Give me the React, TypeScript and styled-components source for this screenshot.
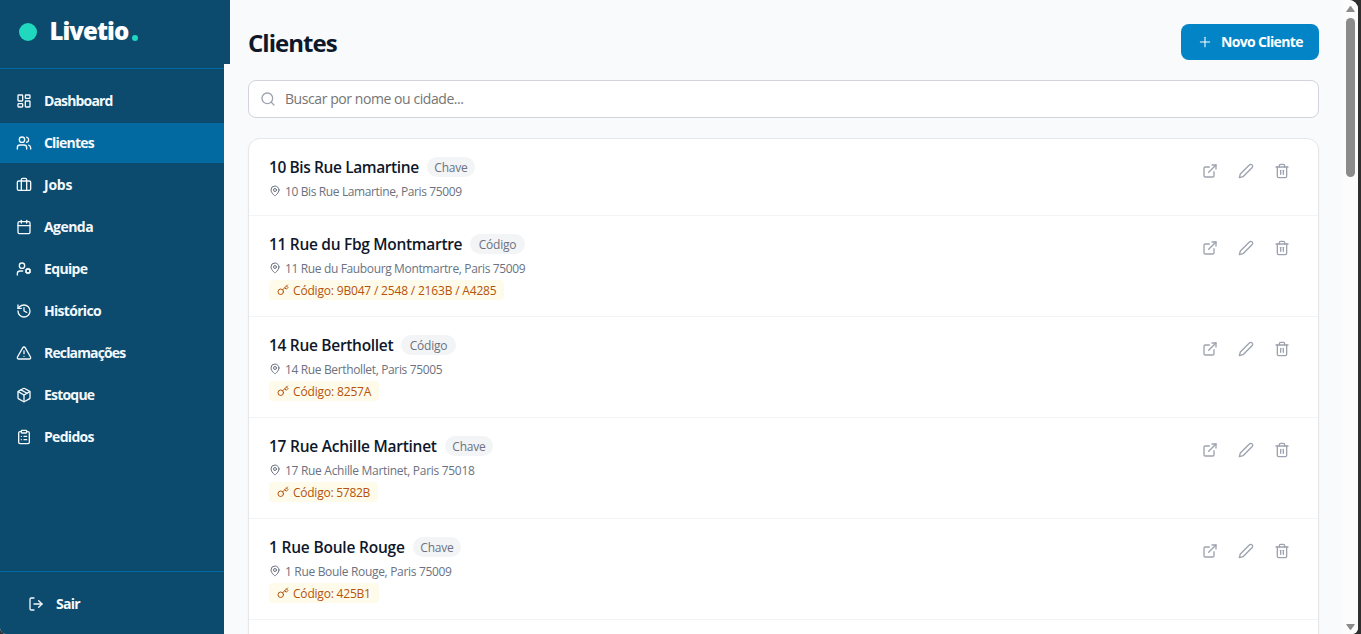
import React from 'react';
import styled, { createGlobalStyle } from 'styled-components';
import {
  LayoutDashboard, Users, Briefcase, Calendar, UserCog, History, TriangleAlert, Package,
  ClipboardList, LogOut, Plus, Search, ExternalLink, Trash2,
} from 'lucide-react';

const GlobalStyle = createGlobalStyle`
  * { box-sizing: border-box; }
  body { margin: 0; overflow: hidden; background: #2f2f2f; }
  button, input { font: inherit; border: 0; background: none; padding: 0; }
`;

const Shell = styled.div`
  display: flex;
  width: 1358px;
  height: 634px;
  overflow: hidden;
  border-radius: 0 9px 6px 6px;
  background: #f8fafc;
  color: #0f172a;
  font-family: 'Segoe UI', 'Open Sans', 'Noto Sans', sans-serif;
  font-size: 14px;
  line-height: 20px;
`;

const Sidebar = styled.aside`
  display: flex;
  flex-direction: column;
  flex: none;
  width: 224px;
  background: #0c4a6e;
  color: #f4f9fc;
`;

const Brand = styled.div`
  display: flex;
  align-items: center;
  width: 230px;
  height: 64px;
  padding-left: 19px;
  margin-bottom: 4px;
  background: #0c4a6e;
`;

const BrandMark = styled.span`
  width: 18px;
  height: 18px;
  margin-right: 12.5px;
  border-radius: 50%;
  background: #20d8bd;
`;

const BrandName = styled.span`
  font-size: 24px;
  line-height: 32px;
  font-weight: 800;
  letter-spacing: -0.95px;
  width: 79px;
  margin-bottom: 3px;
  color: #fff;
`;

const BrandDot = styled.span`
  width: 6px;
  height: 6px;
  margin: 12px 0 0 3.3px;
  border-radius: 50%;
  background: #20d8bd;
`;

const Nav = styled.nav`
  display: flex;
  flex: 1;
  flex-direction: column;
  gap: 2px;
  padding-top: 12px;
  border-top: 1px solid #0369a1;
`;

const NavItem = styled.a<{ $active?: boolean; $spacing: number }>`
  display: flex;
  align-items: center;
  gap: 12px;
  height: 40px;
  padding: 0 16px;
  background: ${(p) => (p.$active ? '#0369a1' : 'transparent')};
  font-weight: 700;
  letter-spacing: ${(p) => p.$spacing}px;
`;

const SidebarFooter = styled.div`
  height: 63px;
  padding: 12px;
  border-top: 1px solid #0369a1;
`;

const Main = styled.main`
  flex: 1;
  min-width: 0;
  padding: 24px 24px 0;
`;

const PageHeader = styled.header`
  display: flex;
  align-items: center;
  justify-content: space-between;
  height: 36px;
  margin-bottom: 20px;
`;

const PageTitle = styled.h1`
  margin: 1px 0 0;
  font-size: 24px;
  line-height: 32px;
  font-weight: 700;
  letter-spacing: -0.97px;
`;

const PrimaryButton = styled.button`
  display: flex;
  align-items: center;
  gap: 8px;
  width: 138px;
  height: 36px;
  padding-left: 16px;
  border-radius: 8px;
  background: #0284c7;
  color: #fff;
  font-weight: 700;
  letter-spacing: -0.65px;
  white-space: nowrap;
`;

const SearchBox = styled.label`
  display: flex;
  align-items: center;
  gap: 9px;
  height: 38px;
  margin-bottom: 20px;
  padding: 0 11px;
  border: 1px solid #d1d5db;
  border-radius: 8px;
  background: #fff;
  color: #9ca3af;
`;

const SearchInput = styled.input`
  flex: 1;
  outline: 0;
  letter-spacing: -0.43px;
  &::placeholder { color: #757575; opacity: 1; }
`;

const Card = styled.section`
  height: 520px;
  border: 1px solid #e5e7eb;
  border-radius: 12px;
  background: #fff;
  box-shadow: 0 1px 2px rgba(0, 0, 0, 0.05);
`;

const Row = styled.article`
  display: flex;
  justify-content: space-between;
  padding: 16px 20px;
  border-bottom: 1px solid #f3f4f6;
`;

const TitleLine = styled.div`
  display: flex;
  align-items: center;
  gap: 8px;
  height: 24px;
  margin-bottom: 4px;
`;

const ClientName = styled.h2<{ $width: number; $spacing: number }>`
  width: ${(p) => p.$width}px;
  margin: 0;
  font-size: 15.5px;
  line-height: 24px;
  font-weight: 600;
  letter-spacing: ${(p) => p.$spacing}px;
  white-space: nowrap;
`;

const Badge = styled.span<{ $width: number }>`
  display: flex;
  justify-content: center;
  width: ${(p) => p.$width}px;
  height: 20px;
  border-radius: 10px;
  background: #f3f4f6;
  color: #6b7280;
  font-size: 12px;
  line-height: 22px;
  letter-spacing: -0.2px;
`;

const Address = styled.div<{ $spacing: number }>`
  display: flex;
  align-items: center;
  gap: 4px;
  height: 16px;
  color: #6b7280;
  font-size: 12px;
  line-height: 18px;
  letter-spacing: ${(p) => p.$spacing}px;
`;

const AccessCode = styled.div<{ $spacing: number }>`
  display: flex;
  align-items: center;
  gap: 4px;
  width: fit-content;
  height: 20px;
  margin-top: 4px;
  padding: 0 8px;
  border-radius: 4px;
  background: #fffbeb;
  color: #b45309;
  font-size: 12px;
  letter-spacing: ${(p) => p.$spacing}px;
`;

const SmallText = styled.span`
  padding-top: 1px;
`;

const Actions = styled.div`
  display: flex;
  gap: 4px;
`;

const IconButton = styled.button`
  display: grid;
  place-items: center;
  width: 32px;
  height: 32px;
  color: #9ca3af;
`;

const ScrollTrack = styled.div`
  display: flex;
  flex-direction: column;
  align-items: center;
  width: 15px;
  padding: 6px 0 4px;
  background: #fcfcfc;
`;

const ScrollThumb = styled.div`
  width: 9px;
  height: 159px;
  margin: 6px 0 auto;
  border-radius: 5px;
  background: #8b8b8b;
`;

const StrokeIcon = styled.svg.attrs({
  viewBox: '0 0 24 24',
  fill: 'none',
  stroke: 'currentColor',
  strokeWidth: 2,
  strokeLinecap: 'round',
  strokeLinejoin: 'round',
})`
  flex: none;
`;

const PinIcon = () => (
  <StrokeIcon width="12" height="12">
    <path d="M20 10c0 6-8 12-8 12s-8-6-8-12a8 8 0 0 1 16 0Z" />
    <circle cx="12" cy="10" r="3" />
  </StrokeIcon>
);

const KeyIcon = () => (
  <StrokeIcon width="12" height="12">
    <circle cx="7.5" cy="15.5" r="5.5" />
    <path d="m21 2-9.6 9.6" />
    <path d="m15.5 7.5 3 3L22 7l-3-3" />
  </StrokeIcon>
);

const PencilIcon = () => (
  <StrokeIcon width="16" height="16">
    <path d="M17 3a2.85 2.83 0 1 1 4 4L7.5 20.5 2 22l1.5-5.5Z" />
  </StrokeIcon>
);

const Arrow = ({ down }: { down?: boolean }) => (
  <svg width="9" height="6" viewBox="0 0 9 6">
    <path d={down ? 'M.7 0h7.6q.7 0 .3.7L5.2 5.6q-.7.8-1.4 0L.4.7Q0 0 .7 0Z' : 'M.7 6h7.6q.7 0 .3-.7L5.2.4q-.7-.8-1.4 0L.4 5.3Q0 6 .7 6Z'} fill="#8b8b8b" />
  </svg>
);

const navItems = [
  { label: 'Dashboard', Icon: LayoutDashboard, spacing: -0.85 },
  { label: 'Clientes', Icon: Users, spacing: -0.8, active: true },
  { label: 'Jobs', Icon: Briefcase, spacing: -0.25 },
  { label: 'Agenda', Icon: Calendar, spacing: -0.55 },
  { label: 'Equipe', Icon: UserCog, spacing: -0.65 },
  { label: 'Histórico', Icon: History, spacing: -0.7 },
  { label: 'Reclamações', Icon: TriangleAlert, spacing: -0.85 },
  { label: 'Estoque', Icon: Package, spacing: -0.8 },
  { label: 'Pedidos', Icon: ClipboardList, spacing: -0.7 },
];

const clients = [
  { name: '10 Bis Rue Lamartine', access: 'Chave', address: '10 Bis Rue Lamartine, Paris 75009', width: 150, ns: -0.4, as: -0.38, cs: -0.2 },
  { name: '11 Rue du Fbg Montmartre', access: 'Código', address: '11 Rue du Faubourg Montmartre, Paris 75009', code: '9B047 / 2548 / 2163B / A4285', width: 193, ns: -0.3, as: -0.36, cs: -0.18 },
  { name: '14 Rue Berthollet', access: 'Código', address: '14 Rue Berthollet, Paris 75005', code: '8257A', width: 124, ns: -0.3, as: -0.36, cs: -0.15 },
  { name: '17 Rue Achille Martinet', access: 'Chave', address: '17 Rue Achille Martinet, Paris 75018', code: '5782B', width: 168, ns: -0.25, as: -0.3, cs: -0.25 },
  { name: '1 Rue Boule Rouge', access: 'Chave', address: '1 Rue Boule Rouge, Paris 75009', code: '425B1', width: 136, ns: -0.2, as: -0.32, cs: -0.2 },
];

export default function App() {
  return (
    <>
      <GlobalStyle />
      <Shell>
        <Sidebar>
          <Brand><BrandMark /><BrandName>Livetio</BrandName><BrandDot /></Brand>
          <Nav>
            {navItems.map(({ label, Icon, active, spacing }) => (
              <NavItem key={label} $active={active} $spacing={spacing}><Icon size={16} />{label}</NavItem>
            ))}
          </Nav>
          <SidebarFooter><NavItem $spacing={-0.75}><LogOut size={16} />Sair</NavItem></SidebarFooter>
        </Sidebar>
        <Main>
          <PageHeader>
            <PageTitle>Clientes</PageTitle>
            <PrimaryButton><Plus size={16} strokeWidth={1.6} />Novo Cliente</PrimaryButton>
          </PageHeader>
          <SearchBox><Search size={16} /><SearchInput placeholder="Buscar por nome ou cidade..." /></SearchBox>
          <Card>
            {clients.map((c) => (
              <Row key={c.name}>
                <div>
                  <TitleLine>
                    <ClientName $width={c.width} $spacing={c.ns}>{c.name}</ClientName>
                    <Badge $width={c.access === 'Chave' ? 48 : 55}>{c.access}</Badge>
                  </TitleLine>
                  <Address $spacing={c.as}><PinIcon /><SmallText>{c.address}</SmallText></Address>
                  {c.code && <AccessCode $spacing={c.cs}><KeyIcon /><SmallText>Código: {c.code}</SmallText></AccessCode>}
                </div>
                <Actions>
                  <IconButton><ExternalLink size={16} /></IconButton>
                  <IconButton><PencilIcon /></IconButton>
                  <IconButton><Trash2 size={16} /></IconButton>
                </Actions>
              </Row>
            ))}
          </Card>
        </Main>
        <ScrollTrack><Arrow /><ScrollThumb /><Arrow down /></ScrollTrack>
      </Shell>
    </>
  );
}
